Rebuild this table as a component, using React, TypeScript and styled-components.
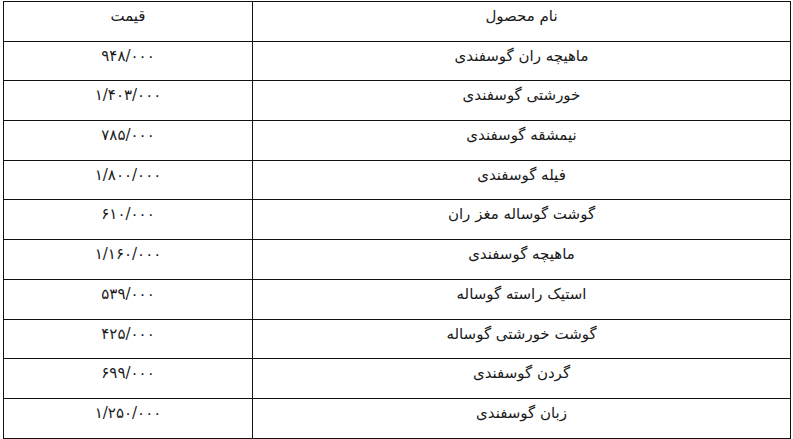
import React from "react";
import styled, { createGlobalStyle } from "styled-components";

const GlobalStyle = createGlobalStyle`
  html, body {
    margin: 0;
    padding: 0;
    background: #ffffff;
  }
  body {
    font-family: "DejaVu Sans", "Noto Sans", sans-serif;
    color: #1a1a1a;
  }
`;

const Page = styled.div`
  padding: 1px 3px 0 3px;
  width: 793px;
  height: 439px;
  box-sizing: border-box;
  overflow: hidden;
`;

const Table = styled.table`
  direction: rtl;
  width: 788px;
  border-collapse: collapse;
  table-layout: fixed;
`;

const Cell = styled.td<{ $price?: boolean }>`
  border: 1px solid #111;
  height: 39.7px;
  box-sizing: border-box;
  padding: 3px 4px 0 4px;
  vertical-align: top;
  text-align: center;
  font-size: 15px;
  line-height: 23px;
  letter-spacing: ${(p) => (p.$price ? "1.5px" : "0")};
  width: ${(p) => (p.$price ? "249px" : "auto")};
  color: #1a1a1a;
`;

const rows: [string, string][] = [
  ["ماهیچه ران گوسفندی", "۹۴۸/۰۰۰"],
  ["خورشتی گوسفندی", "۱/۴۰۳/۰۰۰"],
  ["نیمشقه گوسفندی", "۷۸۵/۰۰۰"],
  ["فیله گوسفندی", "۱/۸۰۰/۰۰۰"],
  ["گوشت گوساله مغز ران", "۶۱۰/۰۰۰"],
  ["ماهیچه گوسفندی", "۱/۱۶۰/۰۰۰"],
  ["استیک راسته گوساله", "۵۳۹/۰۰۰"],
  ["گوشت خورشتی گوساله", "۴۲۵/۰۰۰"],
  ["گردن گوسفندی", "۶۹۹/۰۰۰"],
  ["زبان گوسفندی", "۱/۲۵۰/۰۰۰"],
];

export default function App() {
  return (
    <>
      <GlobalStyle />
      <Page>
        <Table>
          <tbody>
            <tr>
              <Cell>نام محصول</Cell>
              <Cell $price>قیمت</Cell>
            </tr>
            {rows.map(([name, price]) => (
              <tr key={name}>
                <Cell>{name}</Cell>
                <Cell $price>{price}</Cell>
              </tr>
            ))}
          </tbody>
        </Table>
      </Page>
    </>
  );
}
